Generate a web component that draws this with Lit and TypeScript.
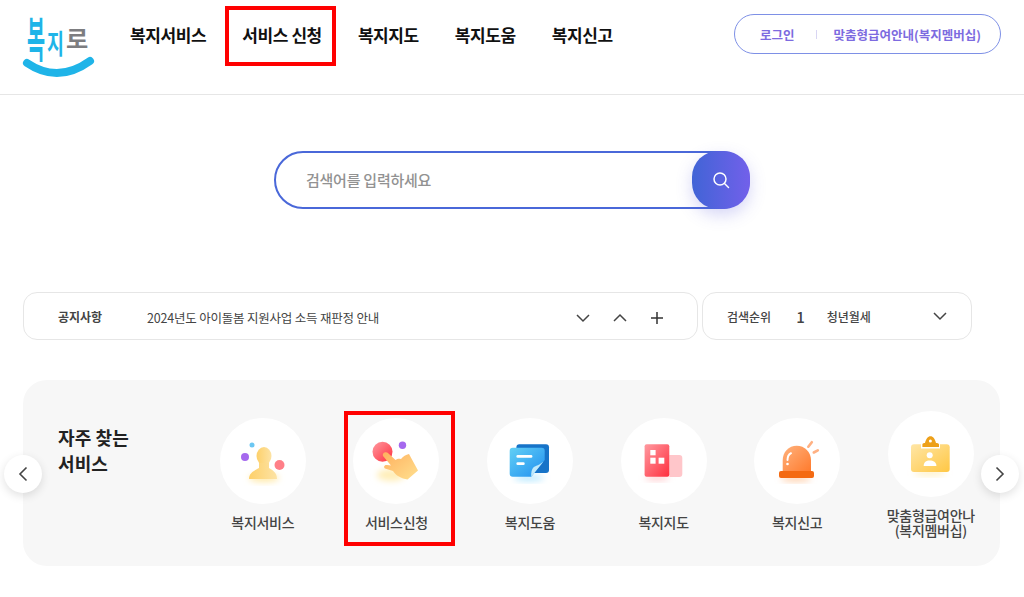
import { LitElement, html, css, svg } from 'lit';
import { customElement } from 'lit/decorators.js';

const chevron = (up = false) => html`<svg class="chev" width="16" height="10" viewBox="0 0 16 10" fill="none">
  <path d=${up ? 'M2 8l6-6 6 6' : 'M2 2l6 6 6-6'} stroke="#444" stroke-width="1.5"/>
</svg>`;

const defs = svg`<defs>
  <linearGradient id="yel" x1="0" y1="0" x2="1" y2="0"><stop offset="0" stop-color="#fdd06a"/><stop offset="1" stop-color="#fde3a4"/></linearGradient>
  <linearGradient id="hand" x1="0" y1="0" x2="1" y2="1"><stop offset="0" stop-color="#ffb05e"/><stop offset="1" stop-color="#ffe08f"/></linearGradient>
  <linearGradient id="red" x1="0" y1="0" x2="1" y2="1"><stop offset="0" stop-color="#ff9aa0"/><stop offset="1" stop-color="#ff2f3f"/></linearGradient>
  <linearGradient id="blue" x1="0" y1="0" x2="1" y2="1"><stop offset="0" stop-color="#63d0f5"/><stop offset="1" stop-color="#1f8ff0"/></linearGradient>
  <linearGradient id="orange" x1="0" y1="0" x2="1" y2="1"><stop offset="0" stop-color="#ffb27d"/><stop offset="1" stop-color="#ff7a2c"/></linearGradient>
  <linearGradient id="card" x1="0" y1="0" x2="1" y2="1"><stop offset="0" stop-color="#ffe6a6"/><stop offset="1" stop-color="#ffc744"/></linearGradient>
  <filter id="blur" x="-50%" y="-50%" width="200%" height="200%"><feGaussianBlur stdDeviation="3"/></filter>
</defs>`;

const icons = {
  person: svg`
    <ellipse cx="44" cy="60" rx="15" ry="4" fill="#ffe9a8" filter="url(#blur)"/>
    <ellipse cx="44" cy="38" rx="7.5" ry="9" fill="url(#yel)"/>
    <path d="M29 61c0-7 7-9 10-11v-5h10v5c3 2 8 4 8 11z" fill="url(#yel)"/>
    <circle cx="25" cy="39" r="4" fill="#a569ee"/>
    <circle cx="32" cy="27" r="2.5" fill="#6cc7f2"/>
    <circle cx="59.5" cy="47" r="5" fill="#ff7f88"/>`,
  hand: svg`
    <ellipse cx="38" cy="57" rx="14" ry="6" fill="#ffeeb8" filter="url(#blur)"/>
    <circle cx="29.5" cy="33.7" r="10" fill="url(#red)"/>
    <circle cx="49.5" cy="27.3" r="3.7" fill="#a569ee"/>
    <path d="M30 38c-1-3 3-5 5.500-2.500l7 6.500c2-1.500 3.500-1.500 5.500-1 2-2.500 5-4.500 8-5l9 16.500-10.500 9c-6-1-12-4-14.500-8.500l-8-2.500c-2-2 0-4 2-3.500l4 .5z" fill="url(#hand)"/>`,
  chat: svg`
    <ellipse cx="42" cy="60" rx="15" ry="3" fill="#b5e8ff" filter="url(#blur)"/>
    <rect x="29.400" y="26.300" width="32.600" height="28.700" rx="3" fill="#1673c8"/>
    <path d="M25.700 29.700h29a3 3 0 0 1 3 3V42l-13.400 16.700H25.700a3 3 0 0 1-3-3v-23a3 3 0 0 1 3-3z" fill="url(#blue)"/>
    <path d="M57.700 42l-13.400 16.700c-.5-4 .5-8 2.500-9.700 3-1.500 8-3 10.900-7z" fill="#bfe9fb"/>
    <rect x="29.400" y="37" width="16" height="2.700" rx="1.300" fill="#fff"/>
    <rect x="29.400" y="44.300" width="8.300" height="2.700" rx="1.300" fill="#fff"/>`,
  map: svg`
    <ellipse cx="36" cy="60" rx="12" ry="2.500" fill="#ffc8cb" filter="url(#blur)"/>
    <path d="M48.300 37h10a3 3 0 0 1 3 3v16a3 3 0 0 1-3 3h-10z" fill="#ffc6ca"/>
    <rect x="23.600" y="26.300" width="24.700" height="32.400" rx="2" fill="url(#red)"/>
    <rect x="29.300" y="32" width="5.300" height="5.300" fill="#fff"/>
    <rect x="29.300" y="39.700" width="5.300" height="6" fill="#fff"/>
    <rect x="37.600" y="39.700" width="5.700" height="6" fill="#fff"/>`,
  siren: svg`
    <ellipse cx="42" cy="61" rx="15" ry="2.500" fill="#ffc9a0" filter="url(#blur)"/>
    <path d="M28.700 54V42c0-8 6-14.300 14-14.300S57 34 57 42v12z" fill="url(#orange)"/>
    <rect x="25" y="53" width="35" height="7" rx="2" fill="#f46a12"/>
    <path d="M33.500 42c0-3 1.300-5.500 3.500-6.800" stroke="#fff" stroke-width="2" fill="none" stroke-linecap="round"/>
    <circle cx="33.500" cy="46" r="1.300" fill="#fff"/>
    <path d="M54.300 28.700l3.500-4.500M59.800 34.500l4-2.200" stroke="#ffb183" stroke-width="2.600" stroke-linecap="round"/>`,
  badge: svg`
    <ellipse cx="42" cy="62" rx="16" ry="2.500" fill="#ffeebc" filter="url(#blur)"/>
    <rect x="23" y="33.300" width="38.700" height="27.700" rx="3" fill="url(#card)"/>
    <path d="M33 37.500v-4c0-1.500 1-2.500 3-2.500 1-4 3.500-6.500 6.500-6.500S48 27 49 31c2 0 3 1 3 2.500v4z" fill="#fff"/>
    <path d="M34.400 36v-2.500c0-1 1-1.500 2.600-1.500 1-4 3-6.700 5.500-6.700s4.500 2.700 5.500 6.700c1.600 0 3 .5 3 1.500V36z" fill="#eda019"/>
    <circle cx="42.400" cy="30" r="1.500" fill="#fff"/>
    <circle cx="41.700" cy="44.300" r="3" fill="#fff"/>
    <path d="M35.700 55c0-4 2.500-5.500 6-5.500s6.700 1.500 6.700 5.500z" fill="#fff"/>`,
};

const services = [
  { icon: icons.person, label: html`복지서비스` },
  { icon: icons.hand, label: html`서비스신청`, marked: true },
  { icon: icons.chat, label: html`복지도움` },
  { icon: icons.map, label: html`복지지도` },
  { icon: icons.siren, label: html`복지신고` },
  { icon: icons.badge, label: html`맞춤형급여안나<br />(복지멤버십)` },
];

const navItems = ['복지서비스', '서비스 신청', '복지지도', '복지도움', '복지신고'];

@customElement('app-root')
export class AppRoot extends LitElement {
  static styles = css`
    :host {
      display: block;
      height: 597px;
      overflow: hidden;
      background: #fff;
      font-family: "Noto Sans CJK KR", "Noto Sans", sans-serif;
      color: #222;
    }
    svg { display: block; }

    /* header */
    .header {
      display: flex;
      align-items: flex-start;
      height: 94px;
      padding: 0 23px;
      border-bottom: 1px solid #e6e6e6;
    }
    .logo { flex: none; width: 72px; height: 70px; margin-top: 10px; overflow: visible; }
    .logo text { font-family: "Noto Sans CJK KR", sans-serif; font-weight: 700; }
    .nav {
      display: flex;
      gap: 36px;
      margin-left: 35px;
      margin-top: 22px;
      font-size: 17px;
      font-weight: 700;
      letter-spacing: -0.4px;
      color: #111;
    }
    .nav span { position: relative; white-space: nowrap; }
    .nav .marked::after {
      content: '';
      position: absolute;
      left: -17px;
      right: -14px;
      top: -16px;
      bottom: -19px;
      border: 4px solid #f00;
    }
    .member {
      display: flex;
      align-items: center;
      box-sizing: border-box;
      width: 267px;
      height: 40px;
      margin-left: auto;
      margin-top: 14px;
      padding-left: 25px;
      border: 1px solid #7e90e6;
      border-radius: 20px;
      font-size: 12.5px;
      font-weight: 700;
      color: #7d6be0;
      white-space: nowrap;
    }
    .member i { width: 1px; height: 9px; margin: 0 17px 0 21px; background: #d9d6f3; }

    /* search */
    .search {
      position: relative;
      display: flex;
      align-items: center;
      box-sizing: border-box;
      width: 476px;
      height: 58px;
      margin: 56px auto 0;
      padding: 0 0 2px 30px;
      border: 2px solid #4a68d9;
      border-radius: 29px;
      font-size: 15px;
      font-weight: 500;
      letter-spacing: -0.25px;
      color: #929292;
    }
    .go {
      position: absolute;
      top: -2px;
      right: -2px;
      display: grid;
      place-items: center;
      width: 58px;
      height: 58px;
      border-radius: 26px;
      background: linear-gradient(90deg, #4164d6, #7260ea);
      box-shadow: 0 6px 16px rgba(90, 90, 220, .25);
    }

    /* notice row */
    .bars { display: flex; gap: 4px; margin: 83px 0 0 23px; }
    .bar {
      display: flex;
      align-items: center;
      box-sizing: border-box;
      height: 48px;
      border: 1px solid #e6e6e6;
      border-radius: 14px;
      font-size: 12px;
      color: #444;
      white-space: nowrap;
    }
    .notice { width: 675px; padding: 0 33px 0 34px; }
    .notice b { width: 89px; font-weight: 700; }
    .notice span { flex: 1; margin-top: 3px; font-size: 12.5px; letter-spacing: -0.2px; }
    .notice .chev { margin: 3px 0 0 20px; }
    .notice .chev:first-of-type { margin-right: 1px; }
    .notice .chev:last-of-type { margin-left: 22px; }
    .rank { width: 270px; padding: 0 23px 0 24px; }
    .rank b { font-weight: 500; }
    .rank em { margin: 0 22px 0 25px; font-style: normal; font-size: 15px; font-weight: 500; }
    .rank span { flex: 1; font-weight: 500; }

    /* frequently used */
    .panel {
      position: relative;
      display: flex;
      align-items: center;
      box-sizing: border-box;
      width: 977px;
      height: 186px;
      margin: 40px 0 0 23px;
      padding-left: 35px;
      border-radius: 24px;
      background: #f7f7f7;
    }
    .panel h2 {
      align-self: flex-start;
      width: 138px;
      margin: 44px 0 0;
      font-size: 18px;
      font-weight: 700;
      line-height: 26px;
      letter-spacing: 0.1px;
      color: #222;
    }
    .list { display: flex; align-items: center; margin-top: 2px; }
    .item {
      position: relative;
      display: flex;
      flex-direction: column;
      align-items: center;
      width: 133.6px;
      font-size: 14px;
      font-weight: 500;
      line-height: 15px;
      letter-spacing: -0.3px;
      color: #444;
      text-align: center;
    }
    .circle {
      width: 86px;
      height: 86px;
      margin-bottom: 11px;
      border-radius: 50%;
      background: #fff;
    }
    .item.marked::after {
      content: '';
      position: absolute;
      left: 14.5px;
      right: 8px;
      top: -7px;
      bottom: -16px;
      border: 4px solid #f00;
    }
    .arrow {
      position: absolute;
      top: 75px;
      display: grid;
      place-items: center;
      width: 38px;
      height: 38px;
      border-radius: 50%;
      background: #fff;
      box-shadow: 0 3px 10px rgba(0, 0, 0, .12);
    }
    .arrow.prev { left: -19px; }
    .arrow.next { right: -19px; }
  `;

  render() {
    return html`
      <div class="header">
        <svg class="logo" viewBox="0 0 72 70">
          <text transform="translate(4 47) scale(.82 2)" font-size="24" fill="#1fb4e8">복</text>
          <text transform="translate(24 44) scale(.92 1.35)" font-size="20" fill="#1fb4e8">지</text>
          <text transform="translate(43 38) scale(1.1 1.1)" font-size="22" fill="#7d7d80">로</text>
          <path d="M4 53Q35 74 67 51" fill="none" stroke="#1fb4e8" stroke-width="8" stroke-linecap="round"/>
        </svg>
        <div class="nav">
          ${navItems.map((n, i) => html`<span class=${i === 1 ? 'marked' : ''}>${n}</span>`)}
        </div>
        <div class="member"><span>로그인</span><i></i><span>맞춤형급여안내(복지멤버십)</span></div>
      </div>

      <div class="search">
        검색어를 입력하세요
        <div class="go">
          <svg width="20" height="20" viewBox="0 0 20 20" fill="none" stroke="#fff" stroke-width="1.500">
            <circle cx="9" cy="9" r="6"/><path d="M13.500 13.500l4 4" stroke-linecap="round"/>
          </svg>
        </div>
      </div>

      <div class="bars">
        <div class="bar notice">
          <b>공지사항</b>
          <span>2024년도 아이돌봄 지원사업 소득 재판정 안내</span>
          ${chevron()}
          ${chevron(true)}
          <svg class="chev" width="14" height="14" viewBox="0 0 14 14"><path d="M7 1v12M1 7h12" stroke="#333" stroke-width="1.500"/></svg>
        </div>
        <div class="bar rank">
          <b>검색순위</b><em>1</em><span>청년월세</span>
          ${chevron()}
        </div>
      </div>

      <div class="panel">
        <h2>자주 찾는<br />서비스</h2>
        <div class="list">
          ${services.map(s => html`
            <div class="item ${s.marked ? 'marked' : ''}">
              <div class="circle">
                <svg width="86" height="86" viewBox="0 0 86 86">${defs}${s.icon}</svg>
              </div>
              <span>${s.label}</span>
            </div>
          `)}
        </div>
        <div class="arrow prev">
          <svg width="10" height="16" viewBox="0 0 10 16" fill="none"><path d="M8.500 1.500L2 8l6.500 6.500" stroke="#444" stroke-width="1.600"/></svg>
        </div>
        <div class="arrow next">
          <svg width="10" height="16" viewBox="0 0 10 16" fill="none"><path d="M1.500 1.500L8 8l-6.500 6.500" stroke="#444" stroke-width="1.600"/></svg>
        </div>
      </div>
    `;
  }
}
